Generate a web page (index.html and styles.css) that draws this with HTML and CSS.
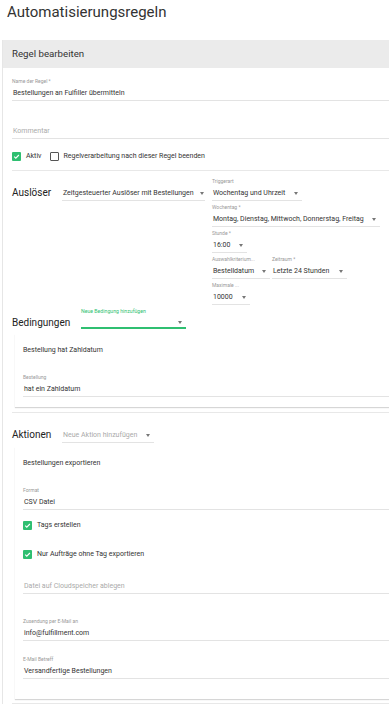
FILE: index.html
```html
<!DOCTYPE html>
<html lang="de">
<head>
    <meta charset="UTF-8" />
    <meta name="viewport" content="width=device-width, initial-scale=1.0">
    <title>Automatisierungsregeln</title>
    <link rel="stylesheet" href="styles.css">
</head>
<body>

    <h1 class="page-title">Automatisierungsregeln</h1>

    <div class="card">
        <div class="card-header">Regel bearbeiten</div>

        <div class="card-body">
            <div class="field field-name">
                <div class="field-label">Name der Regel *</div>
                <div class="field-value">Bestellungen an Fulfiller übermitteln</div>
            </div>

            <div class="field field-comment">
                <div class="field-label"></div>
                <div class="field-value placeholder">Kommentar</div>
            </div>

            <div class="check-row">
                <label class="check">
                    <span class="box checked"><svg viewBox="0 0 9 9"><polyline points="2.2,4.6 3.8,6.2 6.9,3"/></svg></span>
                    Aktiv
                </label>
                <label class="check">
                    <span class="box"></span>
                    Regelverarbeitung nach dieser Regel beenden
                </label>
            </div>

            <!-- Auslöser -->
            <div class="section section-trigger">
                <div class="section-title">Auslöser</div>
                <div class="field select sel-type">
                    <div class="field-label"></div>
                    <div class="field-value">Zeitgesteuerter Auslöser mit Bestellungen<span class="arrow"></span></div>
                </div>
                <div class="trigger-fields">
                    <div class="field select w-triggerart">
                        <div class="field-label">Triggerart</div>
                        <div class="field-value">Wochentag und Uhrzeit<span class="arrow"></span></div>
                    </div>
                    <div class="field select w-wochentag">
                        <div class="field-label">Wochentag *</div>
                        <div class="field-value">Montag, Dienstag, Mittwoch, Donnerstag, Freitag<span class="arrow"></span></div>
                    </div>
                    <div class="field select w-stunde">
                        <div class="field-label">Stunde *</div>
                        <div class="field-value">16:00<span class="arrow"></span></div>
                    </div>
                    <div class="field-pair">
                        <div class="field select w-kriterium">
                            <div class="field-label">Auswahlkriterium...</div>
                            <div class="field-value">Bestelldatum<span class="arrow"></span></div>
                        </div>
                        <div class="field select w-zeitraum">
                            <div class="field-label">Zeitraum *</div>
                            <div class="field-value">Letzte 24 Stunden<span class="arrow"></span></div>
                        </div>
                    </div>
                    <div class="field select w-maximale">
                        <div class="field-label">Maximale ...</div>
                        <div class="field-value">10000<span class="arrow"></span></div>
                    </div>
                </div>
            </div>

            <!-- Bedingungen -->
            <div class="section-block conditions">
                <div class="section">
                    <div class="section-title title-wide">Bedingungen</div>
                    <div class="field select select-active w-bedingung">
                        <div class="field-label">Neue Bedingung hinzufügen</div>
                        <div class="field-value"><span></span><span class="arrow"></span></div>
                    </div>
                </div>

                <div class="inner-box">
                    <div class="inner-title">Bestellung hat Zahldatum</div>
                    <div class="field inner-field">
                        <div class="field-label">Bestellung</div>
                        <div class="field-value">hat ein Zahldatum</div>
                    </div>
                </div>
            </div>

            <!-- Aktionen -->
            <div class="section-block actions">
                <div class="section">
                    <div class="section-title">Aktionen</div>
                    <div class="field select w-aktion">
                        <div class="field-label"></div>
                        <div class="field-value placeholder">Neue Aktion hinzufügen<span class="arrow"></span></div>
                    </div>
                </div>

                <div class="inner-box inner-actions">
                    <div class="inner-title">Bestellungen exportieren</div>
                    <div class="field inner-field">
                        <div class="field-label">Format</div>
                        <div class="field-value">CSV Datei</div>
                    </div>

                    <label class="check check-line first">
                        <span class="box checked"><svg viewBox="0 0 9 9"><polyline points="2.2,4.6 3.8,6.2 6.9,3"/></svg></span>
                        Tags erstellen
                    </label>
                    <label class="check check-line second">
                        <span class="box checked"><svg viewBox="0 0 9 9"><polyline points="2.2,4.6 3.8,6.2 6.9,3"/></svg></span>
                        Nur Aufträge ohne Tag exportieren
                    </label>

                    <div class="field field-cloud">
                        <div class="field-label"></div>
                        <div class="field-value placeholder">Datei auf Cloudspeicher ablegen</div>
                    </div>
                    <div class="field field-mail">
                        <div class="field-label">Zusendung per E-Mail an</div>
                        <div class="field-value">info@fulfillment.com</div>
                    </div>
                    <div class="field field-subject">
                        <div class="field-label">E-Mail Betreff</div>
                        <div class="field-value">Versandfertige Bestellungen</div>
                    </div>
                </div>
            </div>
        </div>
    </div>

</body>
</html>
```

FILE: styles.css
```css
* {
    box-sizing: border-box;
}

body {
    margin: 0;
    width: 389px;
    height: 713px;
    overflow: hidden;
    font-family: Roboto, "Noto Sans", sans-serif;
    background: #fff;
    color: #333;
}

.page-title {
    margin: 0;
    padding: 3px 7px 0;
    font-size: 15px;
    line-height: 18px;
    font-weight: 400;
    color: #333;
}

.card {
    margin: 19px 0 0 2px;
    width: 440px;
    border-left: 1px solid #e6e6e6;
}

.card-header {
    height: 28px;
    line-height: 28px;
    padding-left: 9px;
    background: #ebebeb;
    font-size: 9.7px;
    color: #333;
}

.card-body {
    padding-left: 9px;
}

/* --- fields --- */
.field-label {
    height: 8px;
    font-size: 5px;
    line-height: 8px;
    color: #999;
    white-space: nowrap;
}

.field-value {
    padding: 2px 0 1px 1px;
    font-size: 7px;
    line-height: 12px;
    height: 16px;
    color: #333;
    white-space: nowrap;
    border-bottom: 1px solid #e3e3e3;
}

.field-value.placeholder {
    color: #aaa;
}

.field-name {
    margin-top: 9px;
}

.field-comment {
    margin-top: 14px;
}

/* --- selects --- */
.select .field-value {
    display: flex;
    align-items: center;
    justify-content: space-between;
}

.arrow {
    width: 0;
    height: 0;
    margin-right: 4px;
    border-left: 2.5px solid transparent;
    border-right: 2.5px solid transparent;
    border-top: 3px solid #777;
}

.sel-type {
    width: 143px;
    margin-right: 7px;
}

.sel-type .arrow {
    margin-right: 1px;
}

.w-triggerart { width: 90px; }
.w-wochentag { width: 168px; }
.w-stunde { width: 35px; }
.w-kriterium { width: 58px; }
.w-zeitraum { width: 75px; }
.w-maximale { width: 38px; }
.w-bedingung { width: 105px; }
.w-aktion { width: 92px; }

.select-active .field-label {
    color: #2fbf71;
    font-size: 5.2px;
}

.select-active .field-value {
    padding-bottom: 0;
    height: 14px;
    border-bottom: 2px solid #2fbf71;
}

/* --- checkboxes --- */
.check-row {
    display: flex;
    align-items: center;
    height: 32px;
    padding: 11px 0 8px;
    border-bottom: 1px solid #e8e8e8;
}

.check {
    display: inline-flex;
    align-items: center;
    gap: 5px;
    height: 12px;
    margin-right: 8px;
    font-size: 7px;
    color: #333;
}

.box {
    width: 9px;
    height: 9px;
    border: 1px solid #555;
    border-radius: 1px;
    display: inline-block;
}

.box.checked {
    border: none;
    background: #2fbf71;
}

.box svg {
    display: block;
    width: 9px;
    height: 9px;
    fill: none;
    stroke: #fff;
    stroke-width: 1.1;
}

/* --- sections --- */
.section {
    display: flex;
    align-items: flex-start;
}

.section-trigger {
    margin-top: 6px;
}

.section-title {
    width: 50px;
    padding-top: 9px;
    font-size: 10px;
    line-height: 14px;
    color: #222;
}

.title-wide {
    width: 69px;
}

.trigger-fields {
    display: flex;
    flex-direction: column;
    gap: 2px;
}

.field-pair {
    display: flex;
    gap: 2px;
}

.section-block {
    border-bottom: 1px solid #e8e8e8;
}

.conditions {
    margin-top: 2px;
}

.actions .section {
    margin-top: 6px;
}

.inner-box {
    margin: 4px 0 5px 3px;
    padding: 10px 0 10px 8px;
    box-shadow: 0 1px 1px rgba(0, 0, 0, 0.16);
}

.inner-title {
    font-size: 7px;
    line-height: 12px;
    color: #333;
}

.inner-field {
    margin-top: 17px;
}

.inner-actions {
    margin-bottom: 4px;
    padding-bottom: 20px;
}

.check-line {
    display: flex;
}

.check-line.first {
    margin-top: 9px;
}

.check-line.second {
    margin-top: 17px;
}

.field-cloud {
    margin-top: 10px;
}

.field-mail {
    margin-top: 23px;
}

.field-subject {
    margin-top: 14px;
}
```
